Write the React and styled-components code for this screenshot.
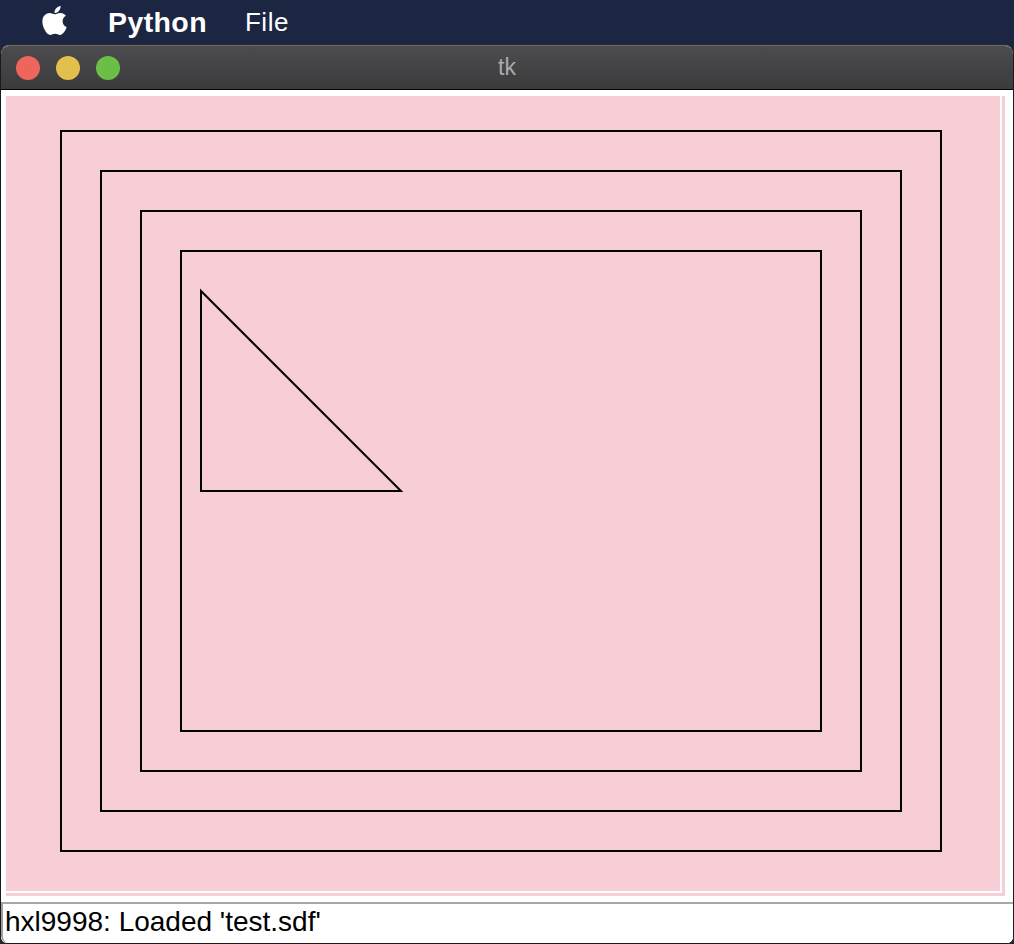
import React from 'react';
import styled, { createGlobalStyle } from 'styled-components';
import { FaApple } from 'react-icons/fa';

const GlobalStyle = createGlobalStyle`
  html, body {
    margin: 0;
    padding: 0;
    background: #1c2541;
    overflow: hidden;
  }
  body {
    font-family: "Liberation Sans", Arial, sans-serif;
  }
`;

const Screen = styled.div`
  width: 1014px;
  height: 944px;
  display: flex;
  flex-direction: column;
  background: #1c2541;
`;

const MenuBar = styled.div`
  height: 45px;
  display: flex;
  align-items: center;
  padding-left: 38px;
  color: #fff;
`;

const AppleMark = styled.span`
  display: flex;
  align-items: center;
  margin-top: -4px;
  margin-right: 37px;
  font-size: 33px;
`;

const MenuItem = styled.span`
  font-size: ${p => (p.$bold ? '28.5px' : '26px')};
  font-weight: ${p => (p.$bold ? 700 : 400)};
  margin-right: ${p => (p.$bold ? '38px' : '0')};
  letter-spacing: ${p => (p.$bold ? '0.4px' : '0.5px')};
`;

const Window = styled.div`
  width: 1012px;
  flex: 1;
  display: flex;
  flex-direction: column;
  border: 1px solid #1a1a1a;
  border-top-color: #6a6a6c;
  border-radius: 9px 9px 7px 7px;
  overflow: hidden;
  background: #fff;
  box-shadow: 0 0 0 1px #2b2b2d;
`;

const TitleBar = styled.div`
  height: 43px;
  display: grid;
  grid-template-columns: 1fr auto 1fr;
  align-items: center;
  padding: 0 15px;
  background: linear-gradient(#4c4c4e, #3b3b3d);
  border-bottom: 1px solid #050505;
`;

const Lights = styled.div`
  display: flex;
  gap: 16px;
`;

const Light = styled.span`
  width: 24px;
  height: 24px;
  border-radius: 50%;
  background: ${p => p.$color};
`;

const Title = styled.span`
  font-size: 23px;
  color: #ababad;
  margin-top: -1px;
`;

const Body = styled.div`
  flex: 1;
  display: flex;
  flex-direction: column;
  padding: 6px 6px 0 5px;
  background: #fff;
`;

const Canvas = styled.div`
  width: 999px;
  height: 800px;
  padding: 0 3px 3px 0;
  box-sizing: border-box;
  background: #f7ced5;
`;

const CanvasInner = styled.div`
  width: 100%;
  height: 100%;
  box-sizing: border-box;
  border-right: 2px solid #fff;
  border-bottom: 2px solid #fff;
  svg {
    display: block;
  }
`;

const Status = styled.div`
  margin: 6px -6px 0 -5px;
  flex: 1;
  display: flex;
  align-items: flex-start;
  padding: 2px 0 0 2px;
  border-top: 2px solid #a8a8a8;
  border-left: 2px solid #9d9d9d;
  border-bottom-left-radius: 7px;
  background: #fff;
  font-size: 28px;
  color: #000;
`;

const shapes = [
  { x: 55, y: 35, w: 880, h: 720 },
  { x: 95, y: 75, w: 800, h: 640 },
  { x: 135, y: 115, w: 720, h: 560 },
  { x: 175, y: 155, w: 640, h: 480 },
];

export default function App() {
  return (
    <>
      <GlobalStyle />
      <Screen>
        <MenuBar>
          <AppleMark><FaApple /></AppleMark>
          <MenuItem $bold>Python</MenuItem>
          <MenuItem>File</MenuItem>
        </MenuBar>
        <Window>
          <TitleBar>
            <Lights>
              <Light $color="#ee665b" />
              <Light $color="#e3bf4d" />
              <Light $color="#6bbf47" />
            </Lights>
            <Title>tk</Title>
            <span />
          </TitleBar>
          <Body>
            <Canvas>
              <CanvasInner>
                <svg width="994" height="795" viewBox="0 0 994 795">
                  {shapes.map((s, i) => (
                    <rect key={i} x={s.x} y={s.y} width={s.w} height={s.h}
                      fill="none" stroke="#000" strokeWidth="2" />
                  ))}
                  <polygon points="195,195 195,395 395,395"
                    fill="none" stroke="#000" strokeWidth="2" />
                </svg>
              </CanvasInner>
            </Canvas>
            <Status>hxl9998: Loaded 'test.sdf'</Status>
          </Body>
        </Window>
      </Screen>
    </>
  );
}
